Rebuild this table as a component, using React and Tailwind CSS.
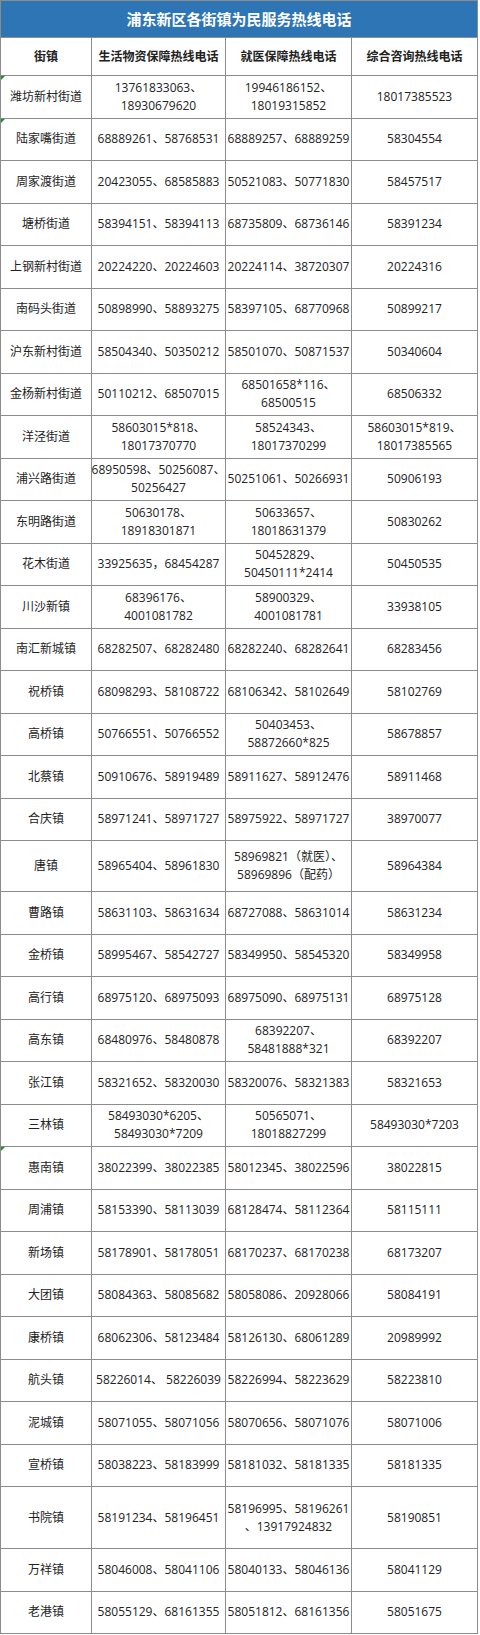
const rows = [
  ["潍坊新村街道", "13761833063、/18930679620", "19946186152、/18019315852", "18017385523", true],
  ["陆家嘴街道", "68889261、58768531", "68889257、68889259", "58304554", true],
  ["周家渡街道", "20423055、68585883", "50521083、50771830", "58457517"],
  ["塘桥街道", "58394151、58394113", "68735809、68736146", "58391234"],
  ["上钢新村街道", "20224220、20224603", "20224114、38720307", "20224316"],
  ["南码头街道", "50898990、58893275", "58397105、68770968", "50899217"],
  ["沪东新村街道", "58504340、50350212", "58501070、50871537", "50340604"],
  ["金杨新村街道", "50110212、68507015", "68501658*116、/68500515", "68506332"],
  ["洋泾街道", "58603015*818、/18017370770", "58524343、/18017370299", "58603015*819、/18017385565"],
  ["浦兴路街道", "68950598、50256087、/50256427", "50251061、50266931", "50906193"],
  ["东明路街道", "50630178、/18918301871", "50633657、/18018631379", "50830262"],
  ["花木街道", "33925635，68454287", "50452829、/50450111*2414", "50450535"],
  ["川沙新镇", "68396176、/4001081782", "58900329、/4001081781", "33938105"],
  ["南汇新城镇", "68282507、68282480", "68282240、68282641", "68283456"],
  ["祝桥镇", "68098293、58108722", "68106342、58102649", "58102769"],
  ["高桥镇", "50766551、50766552", "50403453、/58872660*825", "58678857"],
  ["北蔡镇", "50910676、58919489", "58911627、58912476", "58911468"],
  ["合庆镇", "58971241、58971727", "58975922、58971727", "38970077"],
  ["唐镇", "58965404、58961830", "58969821（就医）、/58969896（配药）", "58964384", false, "h-[51px]"],
  ["曹路镇", "58631103、58631634", "68727088、58631014", "58631234"],
  ["金桥镇", "58995467、58542727", "58349950、58545320", "58349958"],
  ["高行镇", "68975120、68975093", "68975090、68975131", "68975128"],
  ["高东镇", "68480976、58480878", "68392207、/58481888*321", "68392207"],
  ["张江镇", "58321652、58320030", "58320076、58321383", "58321653"],
  ["三林镇", "58493030*6205、/58493030*7209", "50565071、/18018827299", "58493030*7203"],
  ["惠南镇", "38022399、38022385", "58012345、38022596", "38022815", true],
  ["周浦镇", "58153390、58113039", "68128474、58112364", "58115111"],
  ["新场镇", "58178901、58178051", "68170237、68170238", "68173207"],
  ["大团镇", "58084363、58085682", "58058086、20928066", "58084191"],
  ["康桥镇", "68062306、58123484", "58126130、68061289", "20989992"],
  ["航头镇", "58226014、 58226039", "58226994、58223629", "58223810"],
  ["泥城镇", "58071055、58071056", "58070656、58071076", "58071006"],
  ["宣桥镇", "58038223、58183999", "58181032、58181335", "58181335"],
  ["书院镇", "58191234、58196451", "58196995、58196261/、13917924832", "58190851", false, "h-[62px]"],
  ["万祥镇", "58046008、58041106", "58040133、58046136", "58041129"],
  ["老港镇", "58055129、68161355", "58051812、68161356", "58051675"],
];

const headers = ["街镇", "生活物资保障热线电话", "就医保障热线电话", "综合咨询热线电话"];

function Cell({ text, mark, height }) {
  return (
    <div className={`relative flex ${height} flex-col items-center justify-center whitespace-nowrap border-b border-r border-[#8c8c8c] text-center leading-[18px]`}>
      {mark ? (
        <span className="absolute left-0 top-0 h-0 w-0 border-r-[4px] border-t-[4px] border-r-transparent border-t-[#1e8c3a]" />
      ) : null}
      {text.split("/").map((line, i) => (
        <span key={i}>{line}</span>
      ))}
    </div>
  );
}

export default function App() {
  return (
    <div className="min-h-screen bg-white">
      <div
        className="w-[478px] border-l border-t border-[#8c8c8c] text-[12px] text-[#222]"
        style={{ fontFamily: '"Open Sans", "Noto Sans CJK SC", sans-serif' }}
      >
        <div className="flex h-[37px] items-center justify-center border-b border-r border-[#8c8c8c] bg-[#2e75b6] text-[15px] font-bold text-white">
          浦东新区各街镇为民服务热线电话
        </div>
        <div className="grid grid-cols-[91px_134px_126px_126px]">
          {headers.map((h) => (
            <div
              key={h}
              className="flex h-[38px] items-center justify-center whitespace-nowrap border-b border-r border-[#8c8c8c] font-bold"
            >
              {h}
            </div>
          ))}
          {rows.map(([name, a, b, c, mark, h]) => {
            const height = h || "h-[42.5px]";
            return [
              <Cell key={name} text={name} mark={mark} height={height} />,
              <Cell key={name + "a"} text={a} height={height} />,
              <Cell key={name + "b"} text={b} height={height} />,
              <Cell key={name + "c"} text={c} height={height} />,
            ];
          })}
        </div>
      </div>
    </div>
  );
}
